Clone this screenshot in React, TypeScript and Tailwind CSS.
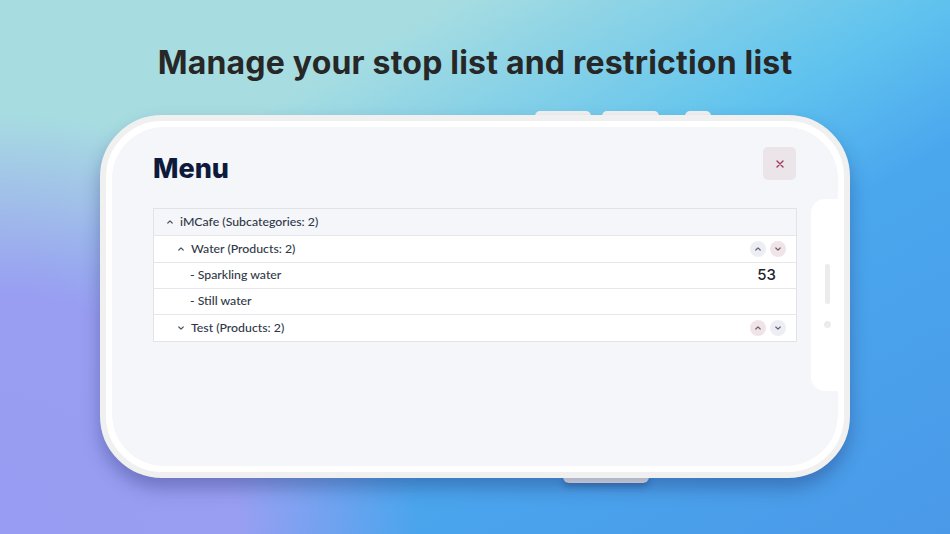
import React from "react";

const Up = ({ c = "#4b5563" }: { c?: string }) => (
  <svg width="8" height="6" viewBox="0 0 8 6" fill="none">
    <polyline points="1.8,4 4,1.9 6.2,4" stroke={c} strokeWidth="1.2" strokeLinecap="round" strokeLinejoin="round" />
  </svg>
);
const Down = ({ c = "#4b5563" }: { c?: string }) => (
  <svg width="8" height="6" viewBox="0 0 8 6" fill="none">
    <polyline points="1.8,2 4,4.1 6.2,2" stroke={c} strokeWidth="1.2" strokeLinecap="round" strokeLinejoin="round" />
  </svg>
);

const Circle = ({ pink, up }: { pink: boolean; up: boolean }) => (
  <div
    className={
      "w-[16px] h-[16px] rounded-full flex items-center justify-center " +
      (pink ? "bg-[#f1e3e7]" : "bg-[#eceef3]")
    }
  >
    {up ? <Up c="#5b6472" /> : <Down c="#5b6472" />}
  </div>
);

export default function App() {
  return (
    <div
      className="w-[950px] h-[534px] overflow-hidden flex flex-col items-center font-['Inter','Open_Sans',sans-serif] bg-[radial-gradient(ellipse_50%_90%_at_0%_100%,#989cf2_0%,#999ef2_50%,rgba(160,170,240,0)_88%),linear-gradient(150deg,#a7dde1_0%,#a7dde1_24%,#60c3ee_50%,#4aa7ee_64%,#4a99e8_100%)]"
    >
      <h1 className="mt-[43px] h-[40px] leading-[40px] text-[32px] font-bold text-[#272727] tracking-[0.2px]">
        Manage your stop list and restriction list
      </h1>

      <div className="relative mt-[32px] w-[750px] h-[363px]">
        {/* top buttons */}
        <div className="absolute -top-[4px] left-[435px] w-[56px] h-[8px] rounded-t-[5px] bg-[#f2f2f2]" />
        <div className="absolute -top-[4px] left-[502px] w-[57px] h-[8px] rounded-t-[5px] bg-[#f2f2f2]" />
        <div className="absolute -top-[4px] left-[585px] w-[26px] h-[8px] rounded-t-[5px] bg-[#f2f2f2]" />
        {/* bottom button */}
        <div className="absolute -bottom-[5px] left-[463px] w-[86px] h-[10px] rounded-b-[6px] bg-[#f2f2f2] shadow-[0_4px_6px_rgba(20,40,90,0.3)]" />

        <div className="relative w-full h-full rounded-[62px] border-[6px] border-[#f0f0f0] bg-white p-[6px] shadow-[0_10px_18px_rgba(30,40,100,0.35)]">
          <div className="relative w-full h-full rounded-[52px] bg-[#f5f6fa] pt-[20px] pl-[41px] pr-[41px]">
            {/* side button */}
            <div className="absolute right-0 top-[72px] w-[27px] h-[192px] bg-white rounded-l-[14px]">
              <div className="absolute left-[14px] top-[65px] w-[5px] h-[40px] rounded-full bg-[#ececec]" />
              <div className="absolute left-[13px] top-[122px] w-[7px] h-[7px] rounded-full bg-[#ececec]" />
            </div>

            <div className="flex items-start justify-between h-[40px]">
              <div className="mt-[2px] text-[27px] leading-[40px] font-extrabold text-[#0e1a3b]">Menu</div>
              <div className="mr-[1px] w-[33px] h-[33px] rounded-[5px] bg-[#ebe4e9] flex items-center justify-center">
                <svg width="8" height="8" viewBox="0 0 8 8">
                  <path d="M1 1L7 7M7 1L1 7" stroke="#9c3b5a" strokeWidth="1.4" strokeLinecap="round" />
                </svg>
              </div>
            </div>

            <div className="mt-[21px] border border-[#e2e3e7] text-[12.3px] font-['Lato',sans-serif] font-medium text-[#2f3747]">
              <div className="h-[26px] bg-[#f5f6f9] flex items-center pl-[12px]">
                <Up />
                <span className="ml-[6px]">iMCafe (Subcategories: 2)</span>
              </div>
              <div className="h-[27px] bg-white border-t border-[#e6e7eb] flex items-center pl-[23px] pr-[10px]">
                <Up />
                <span className="ml-[6px] flex-1">Water (Products: 2)</span>
                <div className="flex gap-[4px]">
                  <Circle pink={false} up />
                  <Circle pink up={false} />
                </div>
              </div>
              <div className="h-[26px] bg-white border-t border-[#e6e7eb] flex items-center pl-[36px] pr-[20px]">
                <span className="flex-1">- Sparkling water</span>
                <span className="text-[15px] font-['Inter',sans-serif] font-medium text-[#1f2533]">53</span>
              </div>
              <div className="h-[26px] bg-white border-t border-[#e6e7eb] flex items-center pl-[36px]">
                <span>- Still water</span>
              </div>
              <div className="h-[27px] bg-white border-t border-[#e6e7eb] flex items-center pl-[23px] pr-[10px]">
                <Down />
                <span className="ml-[6px] flex-1">Test (Products: 2)</span>
                <div className="flex gap-[4px]">
                  <Circle pink up />
                  <Circle pink={false} up={false} />
                </div>
              </div>
            </div>
          </div>
        </div>
      </div>
    </div>
  );
}
